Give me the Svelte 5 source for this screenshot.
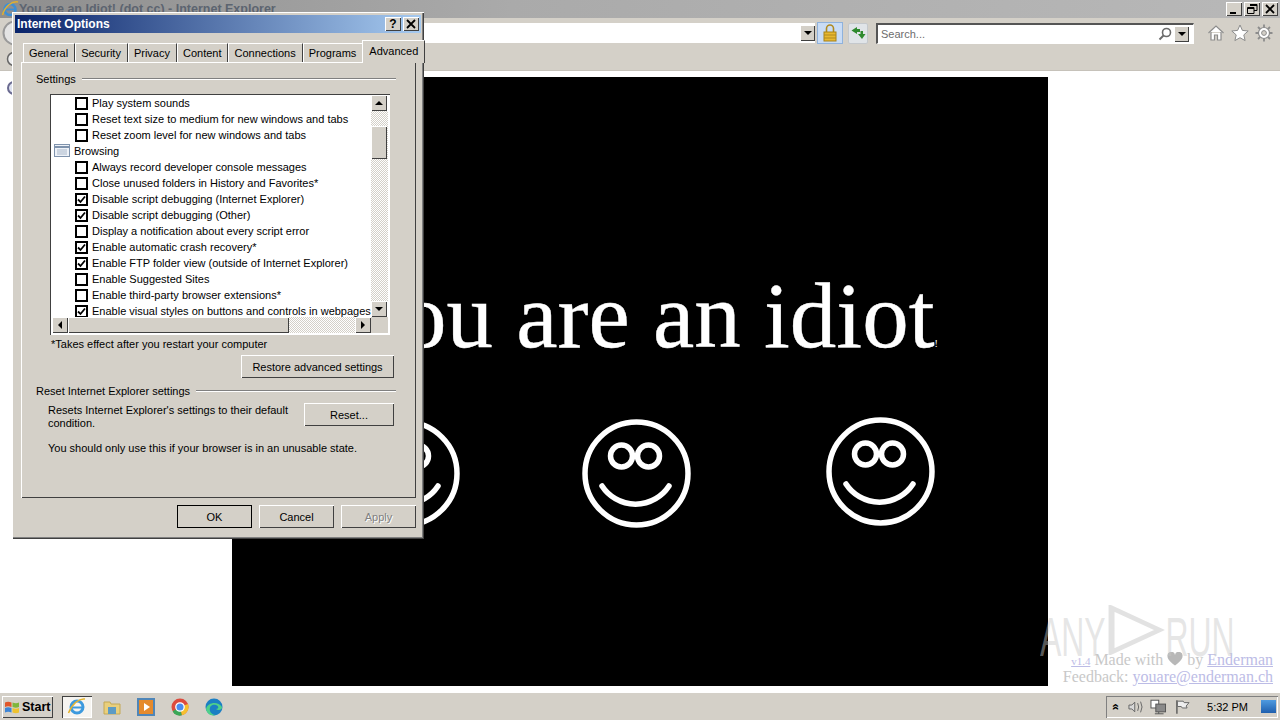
<script lang="ts">
  type Row = { label: string; checked?: boolean; group?: boolean };

  const tabs = ["General", "Security", "Privacy", "Content", "Connections", "Programs"];

  const rows: Row[] = [
    { label: "Play system sounds" },
    { label: "Reset text size to medium for new windows and tabs" },
    { label: "Reset zoom level for new windows and tabs" },
    { label: "Browsing", group: true },
    { label: "Always record developer console messages" },
    { label: "Close unused folders in History and Favorites*" },
    { label: "Disable script debugging (Internet Explorer)", checked: true },
    { label: "Disable script debugging (Other)", checked: true },
    { label: "Display a notification about every script error" },
    { label: "Enable automatic crash recovery*", checked: true },
    { label: "Enable FTP folder view (outside of Internet Explorer)", checked: true },
    { label: "Enable Suggested Sites" },
    { label: "Enable third-party browser extensions*" },
    { label: "Enable visual styles on buttons and controls in webpages", checked: true }
  ];

  const smileys = [
    { left: 0, top: 2 },
    { left: 122, top: 2 },
    { left: 135, top: 0 }
  ];
</script>

<div class="screen">
  <header class="ie-title">
    <svg class="ie-logo" viewBox="0 0 18 18" width="18" height="18">
      <circle cx="9" cy="9.500" r="5.500" fill="none" stroke="#3d8fd6" stroke-width="2.600" />
      <path d="M3.500 9.500h11" stroke="#3d8fd6" stroke-width="1.800" />
      <path d="M1.500 15C4 6 11 1 17 2" fill="none" stroke="#e0b030" stroke-width="1.500" />
    </svg>
    <span class="ie-title-text">You are an Idiot! (dot cc) - Internet Explorer</span>
    <div class="win-btns">
      <span class="cap-btn">
        <svg viewBox="0 0 16 14" width="16" height="14"><path d="M4 10h6v2H4z" fill="#000" /></svg>
      </span>
      <span class="cap-btn">
        <svg viewBox="0 0 16 14" width="16" height="14"><path d="M6 2.500h7v6h-3M3.500 5.500h6.500v6H3.500z M3.500 6.500h6.500M6 3.500h7" fill="none" stroke="#000" /></svg>
      </span>
      <span class="cap-btn">
        <svg viewBox="0 0 16 14" width="16" height="14"><path d="M4 3l8 8M12 3l-8 8" stroke="#000" stroke-width="1.800" /></svg>
      </span>
    </div>
  </header>

  <div class="ie-toolbar">
    <svg class="back" viewBox="0 0 26 26" width="26" height="26">
      <circle cx="13" cy="13" r="11.500" fill="#e4e4e4" stroke="#9a9a9a" stroke-width="2" />
    </svg>
    <div class="address">
      <span class="combo-arrow"><i></i></span>
    </div>
    <span class="lock">
      <svg viewBox="0 0 16 18" width="16" height="18">
        <path d="M4.500 8V4.500a3.500 3.500 0 0 1 7 0V8" fill="none" stroke="#b08a20" stroke-width="1.600" />
        <rect x="2" y="8" width="12" height="9" fill="#e8b830" stroke="#a88218" />
        <path d="M2 11h12M2 14h12" stroke="#b08a20" />
      </svg>
    </span>
    <span class="refresh">
      <svg viewBox="0 0 16 16" width="16" height="16">
        <path d="M7 2L1.500 5.500 7 9V7h3V4H7z" fill="#2f8a2f" />
        <path d="M12 14l3.500-5H13V6h-2.500v3H8z" fill="#2f8a2f" />
      </svg>
    </span>
    <div class="search">
      <span class="search-hint">Search...</span>
      <svg class="search-glass" viewBox="0 0 14 14" width="14" height="14">
        <circle cx="8.500" cy="5.500" r="4" fill="none" stroke="#6b6b6b" stroke-width="1.600" />
        <path d="M5.500 8.500L1.500 12.500" stroke="#6b6b6b" stroke-width="2" />
      </svg>
      <span class="combo-arrow"><i></i></span>
    </div>
    <div class="ie-tools">
      <svg viewBox="0 0 18 18" width="18" height="18">
        <path d="M1.500 9L9 2l7.500 7M4 8v8h3.500v-5h3v5H14V8" fill="#fff" stroke="#8c8c8c" stroke-width="1.200" />
      </svg>
      <svg viewBox="0 0 18 18" width="18" height="18">
        <path d="M9 1l2.400 5.400 5.800.6-4.400 3.900 1.300 5.700L9 13.700l-5.100 2.900 1.300-5.700L.8 7l5.800-.6z" fill="#fff" stroke="#8c8c8c" />
      </svg>
      <svg viewBox="0 0 18 18" width="18" height="18">
        <circle cx="9" cy="9" r="5.500" fill="#fff" stroke="#8c8c8c" stroke-width="1.200" />
        <circle cx="9" cy="9" r="2.400" fill="#d4d0c8" stroke="#8c8c8c" />
        <path d="M9 .5v3M9 14.500v3M.5 9h3M14.500 9h3M3 3l2 2M13 13l2 2M15 3l-2 2M5 13l-2 2" stroke="#8c8c8c" stroke-width="1.800" />
      </svg>
    </div>
  </div>
  <div class="ie-tabs">
    <svg viewBox="0 0 16 16" width="16" height="16">
      <circle cx="8" cy="8" r="6.500" fill="#eee" stroke="#666" stroke-width="1.500" />
    </svg>
  </div>

  <main class="page">
    <svg class="page-icon" viewBox="0 0 16 16" width="16" height="16">
      <circle cx="8" cy="8" r="6" fill="#dfe3f0" stroke="#6a6a90" stroke-width="2" />
    </svg>
    <div class="stage">
      <h1>You are an idiot<small>!</small></h1>
      <div class="smileys">
        {#each smileys as s}
          <svg class="smiley" style="margin-left: {s.left}px; margin-top: {s.top}px" viewBox="0 0 109 109" width="109" height="109">
            <circle cx="54.500" cy="54.500" r="51.500" fill="none" stroke="#fff" stroke-width="5.500" />
            <circle cx="39.500" cy="37" r="11" fill="none" stroke="#fff" stroke-width="5.500" />
            <circle cx="66.500" cy="37" r="11" fill="none" stroke="#fff" stroke-width="5.500" />
            <path d="M20 67A40 40 0 0 0 87 67" fill="none" stroke="#fff" stroke-width="5.500" stroke-linecap="round" />
          </svg>
        {/each}
      </div>
    </div>
    <div class="credits">
      <div><a class="ver" href="#v">v1.4</a> Made with
        <svg class="heart" viewBox="0 0 16 14" width="16" height="14">
          <path d="M8 13.500C2 9 .5 6.500.5 4.200A3.700 3.700 0 0 1 8 3a3.700 3.700 0 0 1 7.500 1.200C15.500 6.500 14 9 8 13.500z" fill="#b8b8b8" />
        </svg>
        by <a href="#e">Enderman</a></div>
      <div>Feedback: <a href="#m">youare@enderman.ch</a></div>
    </div>
  </main>

  <footer class="taskbar">
    <button class="start">
      <svg viewBox="0 0 16 14" width="16" height="14">
        <path d="M1 2.500Q4 1 7.500 2.500V7Q4 5.500 1 7z" fill="#e0572a" />
        <path d="M8.500 2.500Q12 4 15 2.500V7Q12 8.500 8.500 7z" fill="#7fb63c" />
        <path d="M1 8Q4 6.500 7.500 8v4.500Q4 11 1 12.500z" fill="#3d85d6" />
        <path d="M8.500 8Q12 9.500 15 8v4.500q-3 1.500-6.500 0z" fill="#eec22e" />
      </svg>
      Start
    </button>
    <span class="task active">
      <svg viewBox="0 0 20 20" width="20" height="20">
        <circle cx="10" cy="10" r="6" fill="none" stroke="#3d9ade" stroke-width="3" />
        <path d="M4 10.500h12" stroke="#3d9ade" stroke-width="2" />
        <path d="M1.500 16C5 7 12 1 18 2" fill="none" stroke="#e5b42e" stroke-width="1.500" />
      </svg>
    </span>
    <span class="task">
      <svg viewBox="0 0 20 20" width="20" height="20">
        <path d="M2 5h6l1 2h9v10H2z" fill="#e9cf7c" stroke="#c4a854" />
        <rect x="6" y="10" width="8" height="7" fill="#5d9bc4" />
      </svg>
    </span>
    <span class="task">
      <svg viewBox="0 0 20 20" width="20" height="20">
        <rect x="2" y="2" width="16" height="16" fill="#e58a2c" stroke="#4f86b8" stroke-width="2" />
        <path d="M8 6l6 4-6 4z" fill="#fff" />
      </svg>
    </span>
    <span class="task">
      <svg viewBox="0 0 20 20" width="20" height="20">
        <circle cx="10" cy="10" r="8.500" fill="#dd4b3e" />
        <path d="M10 10L2.600 14.300A8.500 8.500 0 0 0 12 18.300z" fill="#3aa757" />
        <path d="M10 10l2 8.300A8.500 8.500 0 0 0 18 7z" fill="#f6c02f" />
        <circle cx="10" cy="10" r="4.200" fill="#4a8cf0" stroke="#fff" stroke-width="1.300" />
      </svg>
    </span>
    <span class="task">
      <svg viewBox="0 0 20 20" width="20" height="20">
        <circle cx="10" cy="10" r="8.500" fill="#1b7fc4" />
        <path d="M2 12C4 5 14 4 18 10c.5 3-4 4-6 2 3 0 3-3 0-4C8 7 5 9 6 14c.5 2 3 4 6 4-5 1.500-9-1-10-6z" fill="#4fd08a" />
      </svg>
    </span>
    <div class="tray">
      <span class="tray-up">»</span>
      <svg viewBox="0 0 18 16" width="18" height="16">
        <path d="M2 6h3l3-3v10l-3-3H2z" fill="#d8d8d8" stroke="#666" />
        <path d="M11 4q2 4 0 8M14 2.500q3 5.500 0 11" fill="none" stroke="#666" />
      </svg>
      <svg viewBox="0 0 18 16" width="18" height="16">
        <rect x="1" y="1" width="8" height="8" fill="#fff" stroke="#555" />
        <rect x="6" y="5" width="10" height="8" fill="#8a8a8a" stroke="#555" />
        <path d="M9 13v2M5 15h9" stroke="#555" />
      </svg>
      <svg viewBox="0 0 18 16" width="18" height="16">
        <path d="M3 1v14" stroke="#555" stroke-width="1.400" />
        <path d="M3.500 2h6l1 1.500h5l-3 3.500 1 2h-5l-1-1.500H3.500z" fill="#eee" stroke="#666" />
      </svg>
      <span class="clock">5:32 PM</span>
      <span class="show-desktop"></span>
    </div>
  </footer>

  <section class="dialog">
    <div class="dlg-title">
      <span>Internet Options</span>
      <div class="dlg-btns">
        <span class="cap-btn help">?</span>
        <span class="cap-btn">
          <svg viewBox="0 0 16 14" width="16" height="14"><path d="M4 3l8 8M12 3l-8 8" stroke="#000" stroke-width="1.800" /></svg>
        </span>
      </div>
    </div>

    <div class="dlg-body">
      <div class="tabstrip">
        {#each tabs as t}
          <span class="tab">{t}</span>
        {/each}
        <span class="tab selected">Advanced</span>
      </div>

      <div class="tabpage">
        <div class="group-head"><span>Settings</span><i></i></div>

        <div class="listbox">
          <div class="list-main">
            <div class="rows">
              {#each rows as row}
                {#if row.group}
                  <div class="row group">
                    <svg viewBox="0 0 16 14" width="16" height="14">
                      <rect x=".5" y=".5" width="15" height="12" fill="#eef2f8" stroke="#7f93ad" />
                      <path d="M.5 3h15" stroke="#7f93ad" stroke-width="2" />
                      <path d="M3 6h10M3 8h10M3 10h10" stroke="#a9b7c9" />
                    </svg>
                    {row.label}
                  </div>
                {:else}
                  <div class="row">
                    <span class="check">
                      {#if row.checked}
                        <svg viewBox="0 0 9 9" width="9" height="9"><path d="M1 4.500l2.500 2.500L8 1.500" fill="none" stroke="#000" stroke-width="1.800" /></svg>
                      {/if}
                    </span>
                    {row.label}
                  </div>
                {/if}
              {/each}
            </div>
            <div class="vbar">
              <span class="sb-btn"><i class="up"></i></span>
              <span class="sb-track"><span class="sb-thumb v"></span></span>
              <span class="sb-btn"><i class="down"></i></span>
            </div>
          </div>
          <div class="hbar">
            <span class="sb-btn"><i class="left"></i></span>
            <span class="sb-track h"><span class="sb-thumb hz"></span></span>
            <span class="sb-btn"><i class="right"></i></span>
          </div>
        </div>

        <p class="note">*Takes effect after you restart your computer</p>
        <div class="restore-row"><button class="btn wide">Restore advanced settings</button></div>

        <div class="group-head reset"><span>Reset Internet Explorer settings</span><i></i></div>
        <div class="reset-row">
          <p>Resets Internet Explorer's settings to their default condition.</p>
          <button class="btn reset-btn">Reset...</button>
        </div>
        <p class="warn">You should only use this if your browser is in an unusable state.</p>
      </div>

      <div class="dlg-actions">
        <button class="btn action default">OK</button>
        <button class="btn action">Cancel</button>
        <button class="btn action" disabled>Apply</button>
      </div>
    </div>
  </section>

  <div class="watermark">
    <span>ANY</span>
    <svg viewBox="0 0 60 70" width="105" height="50" preserveAspectRatio="none">
      <path d="M6 4L54 35 6 66z" fill="none" stroke="#cfcfcf" stroke-width="6" opacity=".6" />
    </svg>
    <span>RUN</span>
  </div>
</div>

<style>
  :global(body) { margin: 0; background: #fff; }
  .screen {
    position: relative; width: 1280px; height: 720px; overflow: hidden;
    display: flex; flex-direction: column;
    font-family: "Liberation Sans", sans-serif; font-size: 11px; color: #000;
  }

  .ie-title {
    height: 18px; flex-shrink: 0; display: flex; align-items: center;
    background: linear-gradient(90deg, #8e8e8e, #aaa 40%, #b8b8b8); padding-left: 1px; position: relative;
  }
  .ie-logo { flex-shrink: 0; }
  .ie-title-text { font-size: 12.500px; font-weight: 700; color: #5c6470; white-space: nowrap; }
  .win-btns { margin-left: auto; display: flex; gap: 2px; padding-right: 2px; }
  .cap-btn {
    width: 16px; height: 14px; display: block; background: #d4d0c8;
    box-shadow: inset 1px 1px 0 #fff, inset -1px -1px 0 #404040;
  }
  .cap-btn svg { display: block; }

  .ie-toolbar {
    height: 30px; flex-shrink: 0; display: flex; align-items: center;
    background: #d4d0c8; padding: 0 7px 0 2px; box-sizing: border-box;
  }
  .back { flex-shrink: 0; }
  .address {
    flex: 1; height: 20px; background: #fff;
    display: flex; align-items: center; justify-content: flex-end;
  }
  .combo-arrow {
    width: 15px; height: 16px; background: #d4d0c8; display: flex;
    align-items: center; justify-content: center; flex-shrink: 0;
    box-shadow: inset 1px 1px 0 #fff, inset -1px -1px 0 #404040;
  }
  .combo-arrow i {
    width: 0; height: 0; border: 4px solid transparent; border-top: 4px solid #000; border-bottom: 0;
  }
  .lock {
    width: 26px; height: 22px; margin-left: 2px; display: flex; align-items: center; justify-content: center;
    background: #c9dcf5; border: 1px solid #8fb2dc; box-sizing: border-box;
  }
  .refresh {
    width: 20px; height: 21px; margin-left: 5px; display: flex; align-items: center; justify-content: center;
    background: #e0e4e8; border: 1px solid #c4c8cc; box-sizing: border-box; border-radius: 2px;
  }
  .search {
    width: 318px; height: 21px; margin-left: 8px; background: #fff; display: flex; align-items: center;
    box-sizing: border-box; padding: 0 4px 0 3px; flex-shrink: 0;
    border-top: 2px solid #555; border-left: 2px solid #555; border-right: 1px solid #fff; border-bottom: 1px solid #fff;
  }
  .search-hint { color: #6d6d6d; flex: 1; }
  .search-glass { margin-right: 2px; }
  .ie-tools { display: flex; gap: 6px; margin-left: 13px; }
  .ie-tabs {
    height: 22px; flex-shrink: 0; background: #d4d0c8; border-bottom: 1px solid #c6c2ba;
    display: flex; align-items: center; padding-left: 6px; box-sizing: content-box;
  }

  .page { flex: 1; position: relative; padding: 6px 232px 6px; background: #fff; min-height: 0; }
  .page-icon { position: absolute; left: 6px; top: 9px; }
  .stage { height: 100%; background: #000; color: #fff; text-align: center; overflow: hidden; }
  h1 {
    margin: 186px 0 0; font-family: "Liberation Serif", serif; font-weight: 400;
    font-size: 93px; line-height: 106px; white-space: nowrap; -webkit-text-stroke: 0.4px #fff;
  }
  h1 small { font-size: 10px; -webkit-text-stroke: 0; }
  .smileys { display: flex; margin: 20px 0 0 119px; align-items: flex-start; }
  .smiley { flex-shrink: 0; }
  .credits {
    position: absolute; right: 7px; bottom: 7px; text-align: right;
    font-family: "Liberation Serif", serif; font-size: 16px; line-height: 17px; color: #c8c8c8;
  }
  .credits > div { height: 17px; white-space: nowrap; }
  .credits a { color: #bcbce6; text-decoration: underline; }
  .credits .ver { font-size: 11px; }
  .heart { vertical-align: -1px; }

  .taskbar {
    height: 28px; flex-shrink: 0; display: flex; align-items: center; box-sizing: border-box;
    background: #d4d0c8; border-top: 1px solid #fff; box-shadow: 0 -1px 0 #d4d0c8; padding: 0 2px;
  }
  .start {
    width: 51px; height: 22px; padding: 0 0 0 2px; display: flex; align-items: center; gap: 2px;
    background: #d4d0c8; border: 0; font: 700 12.500px "Liberation Sans", sans-serif; color: #000;
    box-shadow: inset 1px 1px 0 #fff, inset -1px -1px 0 #404040;
  }
  .task {
    width: 28px; height: 22px; display: flex; align-items: center; justify-content: center;
    margin-left: 6px; flex-shrink: 0;
  }
  .task.active { margin-left: 9px; width: 30px; background: #f6f4f0; box-shadow: inset 1px 1px 0 #404040, inset -1px -1px 0 #fff; }
  .tray {
    margin-left: auto; height: 22px; width: 172px; display: flex; align-items: center; gap: 6px;
    box-sizing: border-box; padding: 0 2px 0 3px;
    box-shadow: inset 1px 1px 0 #808080, inset -1px -1px 0 #fff;
  }
  .tray-up { font-weight: 700; transform: rotate(-90deg); width: 12px; text-align: center; font-size: 12px; }
  .clock { margin-left: 10px; margin-right: 7px; white-space: nowrap; }
  .show-desktop { width: 15px; height: 13px; background: linear-gradient(#4f9be0, #1f5fae); flex-shrink: 0; }

  .dialog {
    position: absolute; left: 12px; top: 12px; width: 412px; height: 527px; box-sizing: border-box;
    background: #d4d0c8; padding: 3px; display: flex; flex-direction: column;
    box-shadow: inset 1px 1px 0 #fff, inset -1px -1px 0 #404040, inset -2px -2px 0 #808080;
  }
  .dlg-title {
    height: 18px; flex-shrink: 0; display: flex; align-items: center; justify-content: space-between;
    padding: 0 2px; background: linear-gradient(90deg, #0a246a, #a6caf0);
    color: #fff; font-weight: 700; font-size: 12px;
  }
  .dlg-btns { display: flex; gap: 2px; }
  .help { font-weight: 700; color: #000; text-align: center; line-height: 14px; font-size: 12px; }
  .dlg-body { flex: 1; display: flex; flex-direction: column; padding: 7px 5px 0 6px; }

  .tabstrip { display: flex; height: 22px; align-items: flex-end; padding-left: 2px; position: relative; z-index: 1; }
  .tab {
    height: 19px; line-height: 19px; padding: 0 6px 0 5px; white-space: nowrap; box-sizing: border-box;
    border-top: 1px solid #fff; border-left: 1px solid #fff; border-right: 1px solid #404040;
  }
  .tab.selected {
    height: 23px; line-height: 21px; padding: 0 6px; background: #d4d0c8;
    margin: 0 0 -1px -1px;
  }
  .tabpage {
    flex: 1; box-sizing: border-box; padding: 10px 0 0 0;
    box-shadow: inset 1px 1px 0 #fff, inset -1px -1px 0 #404040;
    display: flex; flex-direction: column; min-height: 0;
  }
  .group-head { display: flex; align-items: center; margin: 0 20px 0 15px; gap: 6px; height: 14px; }
  .group-head i { flex: 1; height: 1px; background: #808080; border-bottom: 1px solid #fff; }
  .listbox {
    margin: 8px 26px 0 29px; height: 241px; box-sizing: border-box;
    background: #fff; display: flex; flex-direction: column;
    box-shadow: inset 1px 1px 0 #404040, inset -1px -1px 0 #fff;
    padding: 1px 2px 2px;
  }
  .list-main { flex: 1; display: flex; min-height: 0; }
  .rows { flex: 1; overflow: hidden; }
  .row { height: 16px; display: flex; align-items: center; padding-left: 23px; white-space: nowrap; gap: 4px; }
  .row.group { padding-left: 2px; gap: 4px; }
  .check {
    width: 9px; height: 9px; border: 2px solid #000; flex-shrink: 0; display: block; background: #fff;
  }
  .check svg { display: block; }
  .vbar { width: 17px; display: flex; flex-direction: column; flex-shrink: 0; }
  .sb-btn {
    width: 16px; height: 16px; flex-shrink: 0; background: #d4d0c8; display: flex; align-items: center; justify-content: center;
    box-shadow: inset 1px 1px 0 #fff, inset -1px -1px 0 #404040;
  }
  .sb-btn i { width: 0; height: 0; border: 4px solid transparent; }
  .sb-btn i.up { border-top: 0; border-bottom-color: #000; }
  .sb-btn i.down { border-bottom: 0; border-top-color: #000; }
  .sb-btn i.left { border-left: 0; border-right-color: #000; }
  .sb-btn i.right { border-right: 0; border-left-color: #000; }
  .sb-track {
    flex: 1; display: block;
    background: repeating-conic-gradient(#d4d0c8 0 25%, #fff 0 50%) 0 0 / 2px 2px;
  }
  .sb-thumb {
    display: block; background: #d4d0c8;
    box-shadow: inset 1px 1px 0 #fff, inset -1px -1px 0 #404040;
  }
  .sb-thumb.v { height: 33px; margin-top: 15px; width: 16px; }
  .hbar { height: 16px; display: flex; flex-shrink: 0; background: #d4d0c8; padding-right: 17px; }
  .sb-track.h { height: 16px; }
  .sb-thumb.hz { height: 16px; width: 221px; }

  .note { margin: 2px 0 0 30px; height: 15px; line-height: 15px; }
  .restore-row { display: flex; justify-content: flex-end; margin: 3px 22px 0 0; }
  .btn {
    background: #d4d0c8; border: 0; padding: 0; color: #000; font: inherit; height: 23px;
    box-shadow: inset 1px 1px 0 #fff, inset -1px -1px 0 #404040;
  }
  .btn.wide { width: 153px; }
  .group-head.reset { margin-top: 6px; }
  .reset-row { display: flex; justify-content: space-between; align-items: flex-start; margin: 5px 22px 0 27px; }
  .reset-row p { margin: 1px 0 0; width: 250px; line-height: 13px; }
  .reset-btn { width: 90px; }
  .warn { margin: 11px 0 0 27px; line-height: 14px; }

  .dlg-actions { display: flex; justify-content: flex-end; gap: 7px; padding: 7px 0 0 0; height: 38px; box-sizing: border-box; }
  .action { width: 75px; }
  .action.default { outline: 1px solid #000; outline-offset: -1px; }
  .action:disabled { color: #808080; text-shadow: 1px 1px 0 #fff; }

  .watermark {
    position: absolute; left: 1040px; top: 605px; height: 62px;
    display: flex; align-items: center; white-space: nowrap; pointer-events: none;
    font-family: "Liberation Sans", sans-serif; font-size: 56px; color: rgba(200, 200, 200, 0.45);
    transform: scaleX(0.57); transform-origin: left center;
  }
  .watermark svg { flex-shrink: 0; margin-top: -12px; }
</style>
